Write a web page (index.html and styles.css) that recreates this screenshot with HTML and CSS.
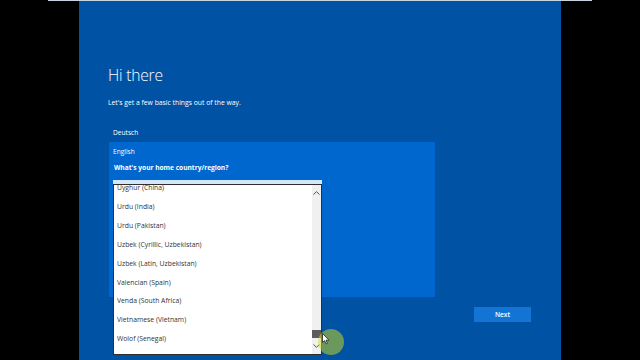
FILE: index.html
```html
<!DOCTYPE html>
<html lang="en">
<head>
  <meta charset="UTF-8" />
  <title>Hi there</title>
  <meta name="viewport" content="width=device-width, initial-scale=1.0" />
  <link rel="stylesheet" href="styles.css">
</head>
<body>
  <div class="frame">
    <div class="setup">
      <h1 class="title">Hi there</h1>
      <p class="lead">Let's get a few basic things out of the way.</p>

      <ul class="langs">
        <li class="lang">Deutsch</li>
        <li class="lang selected">
          <div>English</div>
          <label class="question">What's your home country/region?</label>
          <div class="combo">
            <div class="dropdown">
              <div class="list">
                <ul class="items">
                  <li>Uyghur (China)</li>
                  <li>Urdu (India)</li>
                  <li>Urdu (Pakistan)</li>
                  <li>Uzbek (Cyrillic, Uzbekistan)</li>
                  <li>Uzbek (Latin, Uzbekistan)</li>
                  <li>Valencian (Spain)</li>
                  <li>Venda (South Africa)</li>
                  <li>Vietnamese (Vietnam)</li>
                  <li>Wolof (Senegal)</li>
                </ul>
                <div class="scrollbar">
                  <div class="arrow">
                    <svg width="7" height="4" viewBox="0 0 7 4"><polyline points="0.5,3.5 3.5,0.7 6.5,3.5" fill="none" stroke="#555" stroke-width="1"/></svg>
                  </div>
                  <div class="track"><div class="thumb"></div></div>
                  <div class="arrow">
                    <svg width="7" height="4" viewBox="0 0 7 4"><polyline points="0.5,0.5 3.5,3.3 6.5,0.5" fill="none" stroke="#555" stroke-width="1"/></svg>
                  </div>
                </div>
              </div>
            </div>
          </div>
        </li>
      </ul>

      <div class="footer">
        <button class="next">Next</button>
      </div>
    </div>

    <!-- mouse pointer highlight from the screen recording -->
    <div class="pointer">
      <svg width="8" height="12" viewBox="0 0 8 12"><path d="M0.5 0.5 L0.5 9.5 L2.6 7.6 L4 11 L5.4 10.4 L4 7.2 L7 7.2 Z" fill="#fff" stroke="#222" stroke-width="0.8"/></svg>
    </div>
  </div>
</body>
</html>
```

FILE: styles.css
```css
* {
  margin: 0;
  padding: 0;
  box-sizing: border-box;
  font-family: 'Open Sans', 'Noto Sans', sans-serif;
}

body {
  background: #000;
  width: 640px;
  height: 360px;
  overflow: hidden;
}

.frame {
  position: relative;
  width: 544px;
  height: 360px;
  margin-left: 48px;
  border-top: 1px solid #c9d2e0;
}

.setup {
  width: 482px;
  height: 359px;
  margin-left: 31px;
  padding: 63px 0 0 29px;
  background: #0053a4;
  color: #fff;
}

.title {
  font-size: 15.6px;
  font-weight: 300;
  line-height: 22px;
  letter-spacing: -0.2px;
}

.lead {
  margin-top: 12px;
  font-size: 6.8px;
  line-height: 10px;
}

.langs {
  list-style: none;
  margin: 15px 0 0 1px;
  width: 326px;
}

.lang {
  padding: 0 4px;
  font-size: 6.6px;
  line-height: 19px;
}

.lang.selected {
  background: #0067cf;
  height: 155px;
}

.question {
  display: block;
  font-weight: 700;
  line-height: 13px;
  padding-left: 1px;
}

.combo {
  position: relative;
  margin-top: 6px;
  width: 209px;
  height: 20px;
}

.dropdown {
  position: absolute;
  top: 0;
  left: 0;
  width: 209px;
  border-top: 4px solid #d3e7fa;
  z-index: 5;
}

.list {
  display: flex;
  height: 171px;
  background: #fff;
  border: 1px solid #2e2e2e;
  overflow: hidden;
}

.items {
  flex: 1;
  list-style: none;
  margin-top: -6px;
}

.items li {
  padding-left: 3px;
  font-size: 6.8px;
  line-height: 18.9px;
  color: #333;
}

.scrollbar {
  width: 9px;
  display: flex;
  flex-direction: column;
  background: #f0f0f0;
}

.arrow {
  height: 16px;
  display: flex;
  align-items: center;
  justify-content: center;
}

.track {
  flex: 1;
  display: flex;
  align-items: flex-end;
}

.thumb {
  width: 100%;
  height: 8px;
  background: #5d5d5d;
}

.footer {
  display: flex;
  justify-content: flex-end;
  width: 423px;
  margin-top: 10px;
}

.next {
  width: 57px;
  height: 15px;
  border: none;
  background: #1474d6;
  color: #fff;
  font-size: 6.6px;
  font-weight: 600;
}

.pointer {
  position: absolute;
  left: 270px;
  top: 328px;
  width: 26px;
  height: 26px;
  border-radius: 50%;
  background: rgba(214, 222, 20, 0.5);
  z-index: 10;
}

.pointer svg {
  position: absolute;
  left: 4px;
  top: 4px;
}
```
